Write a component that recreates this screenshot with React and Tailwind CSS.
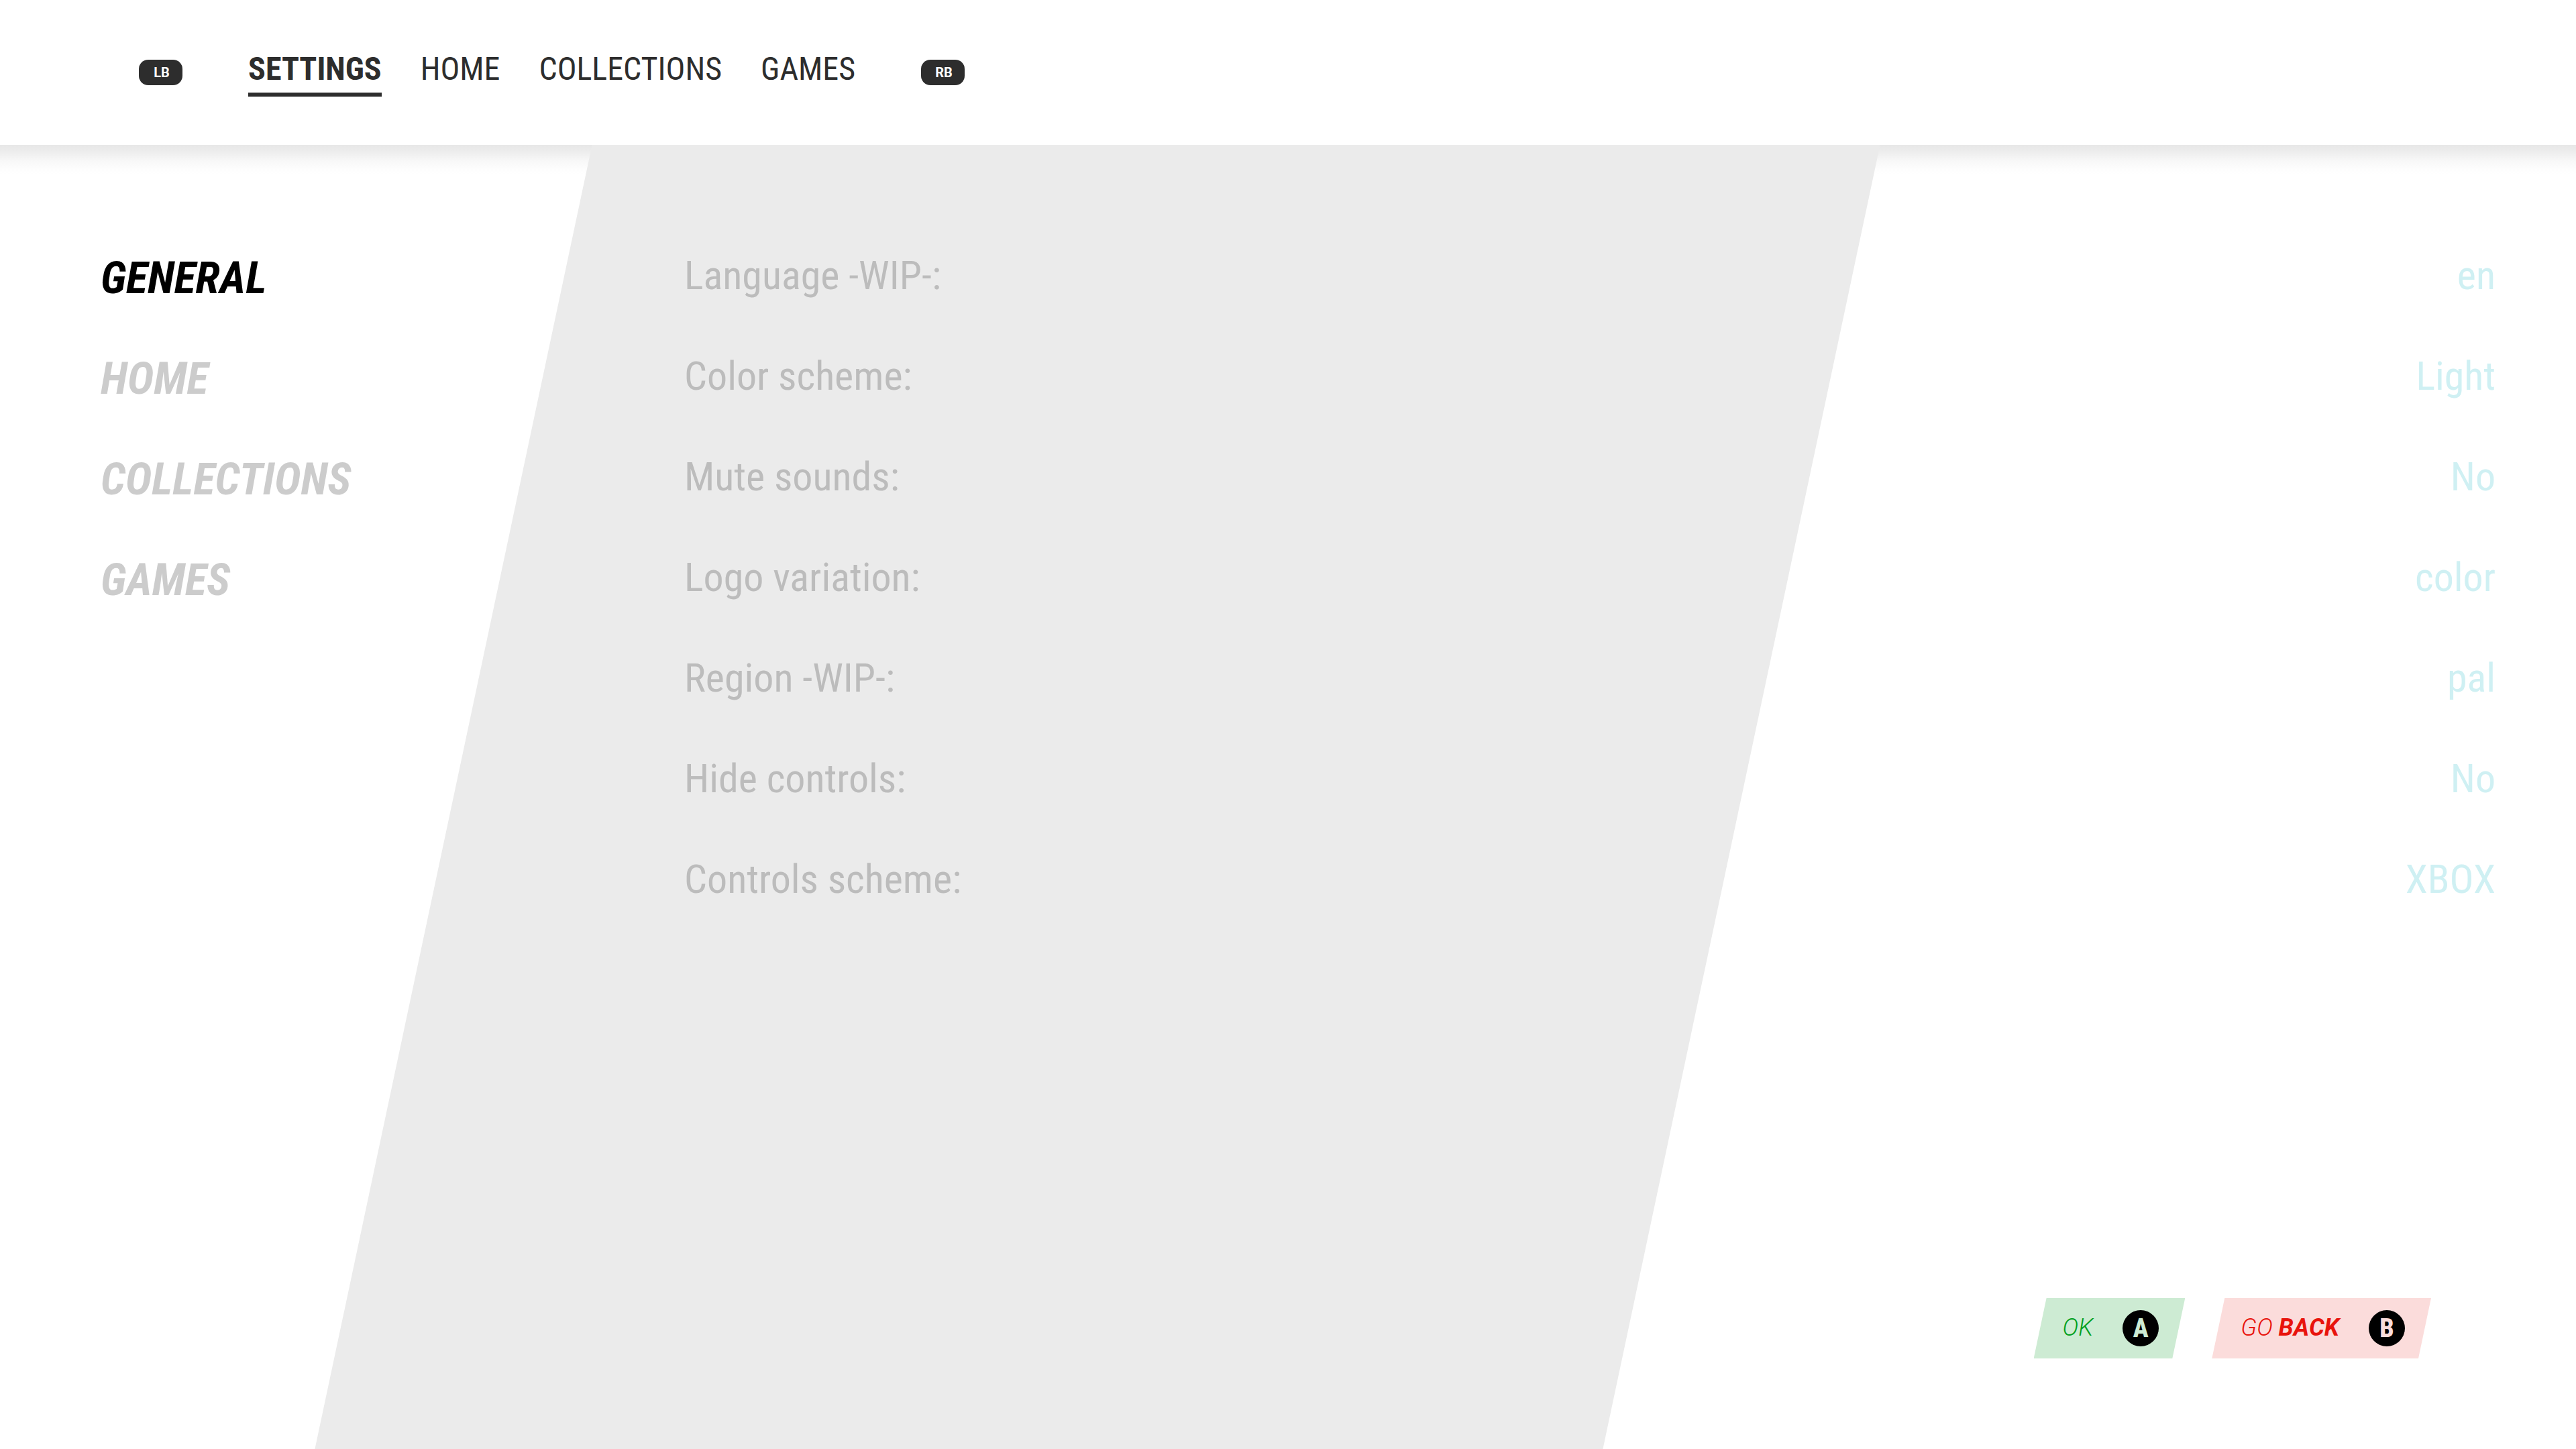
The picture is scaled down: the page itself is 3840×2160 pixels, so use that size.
const tabs = ["SETTINGS", "HOME", "COLLECTIONS", "GAMES"];
const sections = ["GENERAL", "HOME", "COLLECTIONS", "GAMES"];
const settings = [
  ["Language -WIP-:", "en"],
  ["Color scheme:", "Light"],
  ["Mute sounds:", "No"],
  ["Logo variation:", "color"],
  ["Region -WIP-:", "pal"],
  ["Hide controls:", "No"],
  ["Controls scheme:", "XBOX"],
];

function Bumper({ children }) {
  return (
    <button className="h-[38px] w-[65px] rounded-[14px] bg-[#2d2d2d] pl-[3px] font-['Roboto',sans-serif] text-[20px] leading-[38px] font-bold text-white">
      {children}
    </button>
  );
}

function Action({ tone, letterTone, letter, children }) {
  return (
    <button
      className={`flex h-[90px] items-center pr-[39px] pl-[43px] font-['Roboto',sans-serif] text-[36px] font-light italic [clip-path:polygon(19px_0,100%_0,calc(100%-19px)_100%,0_100%)] ${tone}`}
    >
      <span className="pb-[2px] leading-[42px]">{children}</span>
      <span
        className={`ml-11 grid size-[54px] place-items-center rounded-full bg-black font-['Roboto_Condensed','Roboto',sans-serif] text-[38px] leading-[54px] font-extrabold not-italic ${letterTone}`}
      >
        {letter}
      </span>
    </button>
  );
}

export default function App() {
  return (
    <div className="flex min-h-screen flex-col bg-white font-['Roboto_Condensed','Roboto',sans-serif]">
      <header className="flex h-54 items-center bg-white pl-[207px]">
        <Bumper>LB</Bumper>
        <nav className="mx-[98px] flex gap-[58px]">
          {tabs.map((tab, i) => (
            <a
              key={tab}
              href="#"
              className={`border-b-6 pb-1 text-[48px] leading-[62px] text-[#2d2d2d] ${i === 0 ? "border-[#2d2d2d] font-bold" : "border-transparent"}`}
            >
              {tab}
            </a>
          ))}
        </nav>
        <Bumper>RB</Bumper>
      </header>

      <main className="relative isolate flex flex-1 flex-col justify-between overflow-hidden">
        {/* header shadow, then the slanted band above it */}
        <div className="absolute inset-x-0 top-0 -z-20 h-11 bg-[linear-gradient(#e7e7e7,#ececec_20%,#f8f8f8_55%,#fdfdfd_80%,#ffffff)]" />
        <div className="absolute inset-y-0 left-[17.6%] -z-10 w-1/2 -skew-x-12 bg-[#ebebeb]" />

        <div className="flex pt-[123px] pr-[120px] pl-[150px]">
          <nav className="flex w-[870px] flex-col items-start">
            {sections.map((section, i) => (
              <button
                key={section}
                className={`text-[67px] leading-[150px] font-bold italic ${i === 0 ? "text-black" : "text-[#cccccc]"}`}
              >
                {section}
              </button>
            ))}
          </nav>
          <dl className="flex-1">
            {settings.map(([label, value]) => (
              <div key={label} className="flex h-[150px] justify-between text-[60px] leading-[144px]">
                <dt className="text-[#bcbcbc]">{label}</dt>
                <dd className="text-[#cff0f3]">{value}</dd>
              </div>
            ))}
          </dl>
        </div>

        <footer className="flex justify-end gap-10 pr-[216px] pb-[135px]">
          <Action tone="bg-[#cdebd3] text-[#00a01e]" letterTone="text-[#cdebd3]" letter="A">
            OK
          </Action>
          <Action tone="bg-[#fbdcdb] text-[#e8130c]" letterTone="text-[#fbdcdb]" letter="B">
            GO <strong className="font-bold">BACK</strong>
          </Action>
        </footer>
      </main>
    </div>
  );
}
